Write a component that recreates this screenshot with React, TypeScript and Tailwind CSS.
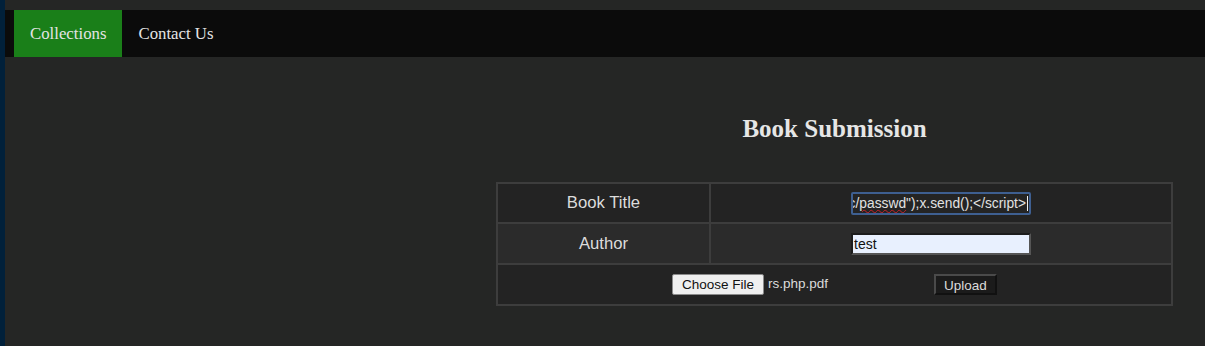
const xss = '<script>var x=new XMLHttpRequest();x.open("GET","file:///etc/';

const App = () => {
  return (
    <div className="flex min-h-[346px] w-full bg-[#252625] font-['Liberation_Sans',Arial,sans-serif]">
      <div className="w-[5px] shrink-0 bg-[#01203a]" />

      <div className="flex-1 flex flex-col pt-[10px] bg-[#252625]">
        <nav className="flex h-[47px] bg-[#0b0b0b] pl-[9px] font-['Liberation_Serif',serif] text-[16.8px] text-[#e4e4e4]">
          <a className="flex items-center px-[16px] bg-[#1a7f19] cursor-pointer">Collections</a>
          <a className="flex items-center px-[16px] cursor-pointer">Contact Us</a>
        </nav>

        <div className="ml-[491px] w-[677px] flex flex-col">
          <h2 className="mt-[58px] text-center font-['Liberation_Serif',serif] font-bold text-[25px] leading-[28px] text-[#e6e6e6]">
            Book Submission
          </h2>

          <table className="mt-[39px] w-full border-collapse border-2 border-[#3d3d3d] text-[16.7px] text-[#dcdcdc]">
            <tbody>
              <tr className="h-[40px] bg-[#232323]">
                <td className="w-[213px] border-2 border-[#3d3d3d] text-center">Book Title</td>
                <td className="border-2 border-[#3d3d3d] text-center">
                  <div className="inline-flex items-center justify-end h-[23px] w-[180px] overflow-hidden rounded-[2px] border-2 border-[#3e5f91] bg-[#242424] px-[1px] text-[13.8px] leading-[17px] text-[#e2e2e2] whitespace-nowrap">
                    <span>
                      {xss}
                      <span className="underline decoration-wavy decoration-[#c8202a] decoration-1 underline-offset-[1px]">passwd</span>
                      {'");x.send();</script>'}
                    </span>
                    <span className="ml-[1px] h-[15px] w-[1px] shrink-0 bg-[#f0f0f0]" />
                  </div>
                </td>
              </tr>
              <tr className="h-[41px] bg-[#2b2b2b]">
                <td className="border-2 border-[#3d3d3d] text-center">Author</td>
                <td className="border-2 border-[#3d3d3d] text-center">
                  <div className="inline-flex items-center h-[22px] w-[180px] border-2 border-[#1c1c1c] border-r-[#555] border-b-[#555] bg-[#e8f0fe] px-[1px] text-left text-[14px] text-[#111]">
                    test
                  </div>
                </td>
              </tr>
              <tr className="h-[41px] bg-[#232323]">
                <td colSpan={2} className="border-2 border-[#3d3d3d]">
                  <div className="flex items-center pl-[174px] text-[13.5px]">
                    <button className="h-[21px] px-[9px] rounded-[2px] border border-[#8a8a8a] bg-[#efefef] text-[13.5px] text-[#111]">
                      Choose File
                    </button>
                    <span className="ml-[4px] text-[#dcdcdc]">rs.php.pdf</span>
                    <button className="ml-[106px] h-[21px] px-[8px] border-2 border-[#4a4a4a] border-r-[#111] border-b-[#111] bg-[#1b1b1b] text-[13.5px] text-[#dcdcdc]">
                      Upload
                    </button>
                  </div>
                </td>
              </tr>
            </tbody>
          </table>
        </div>
      </div>
    </div>
  );
};

export default App;
